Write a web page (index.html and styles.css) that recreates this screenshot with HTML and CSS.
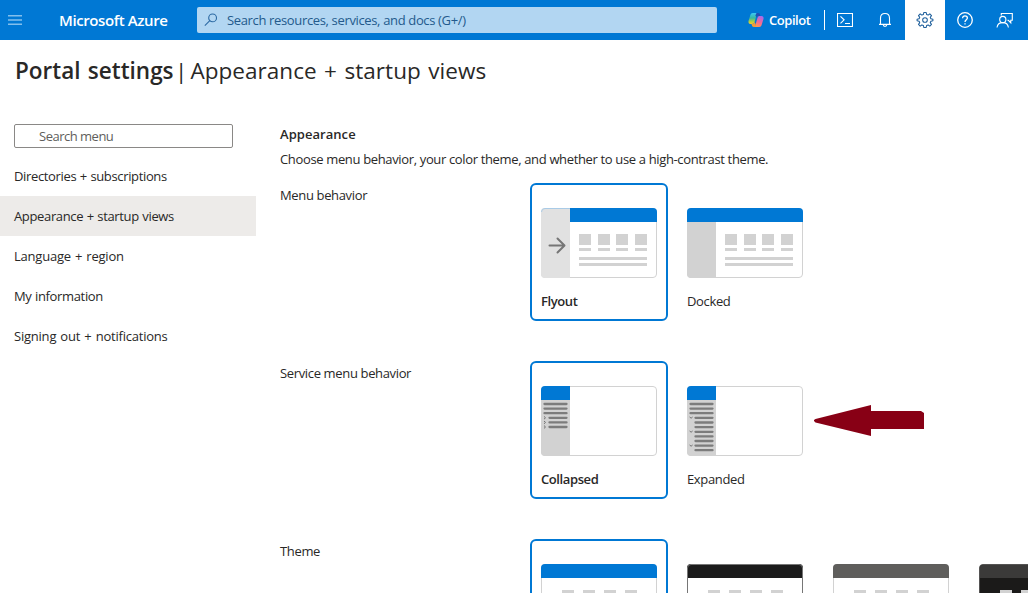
FILE: index.html
```html
<!DOCTYPE html>
<html lang="en">
<head>
<meta charset="utf-8">
<title>Portal settings - Microsoft Azure</title>
<link rel="stylesheet" href="styles.css">
</head>
<body>
<header class="topbar">
  <svg class="menu-icon" width="14" height="10" viewBox="0 0 14 10"><path d="M0 .7h14M0 5h14M0 9.3h14" stroke="#83bfec" stroke-width="1.400"/></svg>
  <span class="brand">Microsoft Azure</span>
  <div class="global-search">
    <svg width="14" height="14" viewBox="0 0 14 14" fill="none" stroke="#2b69a3" stroke-width="1.1"><circle cx="8.6" cy="4.9" r="3.9"/><path d="M5.8 7.7L.8 12.7"/></svg>
    <span class="global-search-text">Search resources, services, and docs (G+/)</span>
  </div>
  <div class="copilot">
    <svg width="16" height="16" viewBox="0 0 16 16">
      <defs>
        <linearGradient id="cool" x1="0" y1="0" x2="0" y2="1"><stop offset="0" stop-color="#3cc8f5"/><stop offset=".45" stop-color="#35b7a5"/><stop offset=".75" stop-color="#a5cf45"/><stop offset="1" stop-color="#ffc928"/></linearGradient>
        <linearGradient id="warm" x1=".7" y1="0" x2=".3" y2="1"><stop offset="0" stop-color="#a56bea"/><stop offset=".5" stop-color="#f0689a"/><stop offset="1" stop-color="#ff9a4d"/></linearGradient>
      </defs>
      <path d="M4.8 1h5.6c-1 .3-1.600 1.100-2 2.500L6.700 9.600C6.200 11.400 5.400 12 4 12H2.400C.8 12 .1 10.500.6 8.800l1.700-5.600C2.800 1.700 3.500 1 4.800 1z" fill="url(#cool)"/>
      <path d="M8.500 1h1.800c1.100 0 1.500.8 1.800 1.700l.4 1.300h-2.200c-1 0-1.500.5-1.800 1.400L7.400 3.500z" fill="#1f4fb5"/>
      <path d="M11.200 15H5.600c1-.3 1.600-1.100 2-2.500l1.700-6.100C9.800 4.600 10.600 4 12 4h1.600c1.600 0 2.300 1.500 1.800 3.200l-1.700 5.600c-.5 1.500-1.200 2.200-2.500 2.200z" fill="url(#warm)"/>
      <path d="M7.500 15H5.700c-1.100 0-1.500-.8-1.800-1.700L3.500 12h.7c1.400 0 2.100-.8 2.500-2.200l1 2.700z" fill="#f59a35"/>
    </svg>
    <span class="copilot-label">Copilot</span>
  </div>
  <div class="divider"></div>
  <nav class="actions">
    <div class="action"><svg width="16" height="14" viewBox="0 0 16 14" fill="none" stroke="#fff"><path d="M.5.500h15v13H.5zM3.500 3.300l3.600 3.500-3.600 3.500M8 10.500h5" stroke-width="1.100"/></svg></div>
    <div class="action"><svg width="14" height="16" viewBox="0 0 14 16" fill="none" stroke="#fff" stroke-width="1.100"><path d="M2.500 12V6.200C2.500 3.300 4.400 1.500 7 1.500s4.500 1.800 4.500 4.700V12M1 12.400h12M5.200 12.600c0 2.400 3.600 2.400 3.600 0"/></svg></div>
    <div class="action action-active"><svg width="18" height="18" viewBox="-9 -9 18 18" fill="none" stroke="#20609c" stroke-width="1.100" stroke-linejoin="round"><path d="M-1.200-7.500h2.400l.4 2 1.500.6 1.700-1.200 1.700 1.700-1.200 1.700.6 1.500 2 .4v1.600l-2 .4-.6 1.500 1.200 1.700-1.700 1.700-1.700-1.200-1.500.6-.4 2h-2.400l-.4-2-1.500-.6-1.700 1.200-1.700-1.700 1.200-1.700-.6-1.500-2-.4v-1.600l2-.4.6-1.500-1.200-1.700 1.700-1.700 1.700 1.200 1.500-.6z"/><circle r="2.300"/></svg></div>
    <div class="action"><svg width="16" height="16" viewBox="0 0 16 16" fill="none" stroke="#fff" stroke-width="1.300"><circle cx="8" cy="8" r="7.300"/><path d="M5.600 6.200C5.600 4.700 6.600 3.800 8 3.800s2.400.9 2.400 2.200C10.400 7.700 8 7.800 8 10M8 11.200v1.400"/></svg></div>
    <div class="action"><svg width="18" height="17" viewBox="0 0 18 17" fill="none" stroke="#fff" stroke-width="1.100"><path d="M5.300 3.500v-2h11v6.800h-1.500v2.500l-2.400-2.500h-1"/><circle cx="6.800" cy="7.500" r="3.100"/><path d="M1 15.500c.4-3 2.700-4.900 5.800-4.900s5.200 1.900 5.600 4.900"/></svg></div>
  </nav>
</header>

<h1 class="title"><span class="title-strong">Portal settings</span><span class="title-bar">|</span><span class="title-page">Appearance + startup views</span></h1>

<div class="layout">
  <aside class="sidebar">
    <div class="menu-search"><span>Search menu</span></div>
    <nav class="menu">
      <a class="menu-item"><span>Directories + subscriptions</span></a>
      <a class="menu-item menu-item-active"><span>Appearance + startup views</span></a>
      <a class="menu-item menu-item-wide"><span>Language + region</span></a>
      <a class="menu-item"><span>My information</span></a>
      <a class="menu-item menu-item-wide"><span>Signing out + notifications</span></a>
    </nav>
  </aside>

  <main class="content">
    <h2 class="section-title"><span>Appearance</span></h2>
    <p class="section-text"><span>Choose menu behavior, your color theme, and whether to use a high-contrast theme.</span></p>

    <section class="setting">
      <div class="setting-label"><span>Menu behavior</span></div>
      <div class="options">
        <div class="option option-selected">
          <svg class="preview" viewBox="0 0 116 70">
            <rect x=".5" y=".5" width="115" height="69" rx="3.500" fill="#fff" stroke="#d2d2d2"/>
            <path d="M29 0h83a4 4 0 0 1 4 4v10H29z" fill="#0078d4"/>
            <path d="M4 0h25v70H4a4 4 0 0 1-4-4V4a4 4 0 0 1 4-4z" fill="#e1e1e1"/>
            <path d="M.5 4A3.500 3.500 0 0 1 4 .5h25" fill="none" stroke="#a9cbe7"/>
            <path d="M8.500 37.500h14.500M16.500 30.500l7 7-7 7" fill="none" stroke="#767676" stroke-width="2" stroke-linecap="round" stroke-linejoin="round"/>
            <path d="M38 26h12v11H38zM57 26h12v11H57zM75 26h12v11H75zM94 26h12v11H94zM38 40h12v3H38zM57 40h12v3H57zM75 40h12v3H75zM94 40h12v3H94zM38 49h68v3H38zM38 55h68v3H38z" fill="#d2d2d2"/>
          </svg>
          <span class="option-label">Flyout</span>
        </div>
        <div class="option">
          <svg class="preview" viewBox="0 0 116 70">
            <rect x=".5" y=".5" width="115" height="69" rx="3.500" fill="#fff" stroke="#d2d2d2"/>
            <path d="M0 14h29v56H4a4 4 0 0 1-4-4z" fill="#d2d2d2"/>
            <path d="M4 0h108a4 4 0 0 1 4 4v10H0V4a4 4 0 0 1 4-4z" fill="#0078d4"/>
            <path d="M38 26h12v11H38zM57 26h12v11H57zM75 26h12v11H75zM94 26h12v11H94zM38 40h12v3H38zM57 40h12v3H57zM75 40h12v3H75zM94 40h12v3H94zM38 49h68v3H38zM38 55h68v3H38z" fill="#d2d2d2"/>
          </svg>
          <span class="option-label">Docked</span>
        </div>
      </div>
    </section>

    <section class="setting">
      <div class="setting-label"><span>Service menu behavior</span></div>
      <div class="options">
        <div class="option option-selected">
          <svg class="preview" viewBox="0 0 116 70">
            <rect x=".5" y=".5" width="115" height="69" rx="3.500" fill="#fff" stroke="#d2d2d2"/>
            <path d="M0 14h29v56H4a4 4 0 0 1-4-4z" fill="#d2d2d2"/>
            <path d="M4 0h25v14H0V4a4 4 0 0 1 4-4z" fill="#0078d4"/>
            <path d="M3.500 18h22M3.500 22.600h22M3.500 27.200h22M8.500 31.800h17M8.500 36.400h17M8.500 41h17" stroke="#7c7c7c" stroke-width="2.300" stroke-linecap="round"/>
            <path d="M3 30.400l1.500 1.400L3 33.200M3 35l1.500 1.400L3 37.800M3 39.600L4.500 41 3 42.400" fill="none" stroke="#707070"/>
          </svg>
          <span class="option-label">Collapsed</span>
        </div>
        <div class="option">
          <svg class="preview" viewBox="0 0 116 70">
            <rect x=".5" y=".5" width="115" height="69" rx="3.500" fill="#fff" stroke="#d2d2d2"/>
            <path d="M0 14h29v56H4a4 4 0 0 1-4-4z" fill="#d2d2d2"/>
            <path d="M4 0h25v14H0V4a4 4 0 0 1 4-4z" fill="#0078d4"/>
            <path d="M3.500 18h22M3.500 22.600h22M3.500 27.200h22M8.500 31.800h17M8.500 36.500h17M8.500 41.100h17M8.500 45.800h17M8.500 50.400h17M8.500 55h17M8.500 59.600h17M8.500 64.200h17" stroke="#7c7c7c" stroke-width="2.300" stroke-linecap="round"/>
            <path d="M2.600 31l1.500 1.200L5.600 31M2.600 45l1.500 1.200L5.600 45M2.600 59l1.500 1.200L5.600 59" fill="none" stroke="#707070"/>
          </svg>
          <span class="option-label">Expanded</span>
        </div>
        <svg class="callout" width="111" height="32" viewBox="0 0 111 32"><path d="M0 15L1.500 14 57 0v6h50l3 2v16H57v7L1.500 17.500 0 16z" fill="#880015"/></svg>
      </div>
    </section>

    <section class="setting">
      <div class="setting-label"><span>Theme</span></div>
      <div class="options">
        <div class="option option-selected">
          <svg class="preview" viewBox="0 0 116 70">
            <rect x=".5" y=".5" width="115" height="69" rx="3.500" fill="#fff" stroke="#d2d2d2"/>
            <path d="M4 0h108a4 4 0 0 1 4 4v10H0V4a4 4 0 0 1 4-4z" fill="#0078d4"/>
            <path d="M21 26h12v11H21zM42 26h12v11H42zM63 26h12v11H63zM84 26h12v11H84z" fill="#d2d2d2"/>
          </svg>
        </div>
        <div class="option">
          <svg class="preview" viewBox="0 0 116 70">
            <rect x=".5" y=".5" width="115" height="69" rx="3.500" fill="#fff"/>
            <path d="M4 0h108a4 4 0 0 1 4 4v10H0V4a4 4 0 0 1 4-4z" fill="#1b1b1b"/>
            <rect x=".5" y=".5" width="115" height="69" rx="3.500" fill="none" stroke="#767676"/>
            <path d="M21 26h12v11H21zM42 26h12v11H42zM63 26h12v11H63zM84 26h12v11H84z" fill="#d2d2d2"/>
          </svg>
        </div>
        <div class="option">
          <svg class="preview" viewBox="0 0 116 70">
            <rect x=".5" y=".5" width="115" height="69" rx="3.500" fill="#fff" stroke="#d2d2d2"/>
            <path d="M4 0h108a4 4 0 0 1 4 4v10H0V4a4 4 0 0 1 4-4z" fill="#5f5e5c"/>
            <path d="M21 26h12v11H21zM42 26h12v11H42zM63 26h12v11H63zM84 26h12v11H84z" fill="#d2d2d2"/>
          </svg>
        </div>
        <div class="option">
          <svg class="preview" viewBox="0 0 116 70">
            <rect x=".5" y=".5" width="115" height="69" rx="3.500" fill="#1b1a19" stroke="#555453"/>
            <path d="M4 1h108a3 3 0 0 1 3 3v10H1V4a3 3 0 0 1 3-3z" fill="#3b3a39"/>
            <path d="M21 26h12v11H21zM42 26h12v11H42zM63 26h12v11H63zM84 26h12v11H84z" fill="#d2d2d2"/>
          </svg>
        </div>
      </div>
    </section>
  </main>
</div>
</body>
</html>
```

FILE: styles.css
```css
* { box-sizing: border-box; }

body {
  margin: 0;
  height: 593px;
  overflow: hidden;
  background: #fff;
  color: #292827;
  font: 13px/20px "Open Sans", "Noto Sans", sans-serif;
  letter-spacing: -0.35px;
}

svg { display: block; flex: none; }

.topbar {
  display: flex;
  align-items: center;
  height: 40px;
  padding-left: 8px;
  background: #0078d4;
  color: #fff;
}
.brand {
  width: 138px;
  margin-left: 37px;
  font-size: 15px;
  font-weight: 600;
  letter-spacing: -0.4px;
  white-space: nowrap;
}
.global-search {
  display: flex;
  align-items: center;
  gap: 9px;
  width: 520px;
  height: 26px;
  padding-left: 7px;
  border-radius: 2px;
  background: #b2d6f2;
  color: #235a8c;
}
.copilot {
  display: flex;
  align-items: center;
  gap: 5px;
  width: 76px;
  margin-left: 31px;
}
.copilot-label { font-size: 13px; font-weight: 600; letter-spacing: -0.45px; }
.divider { width: 1px; height: 20px; background: #fff; }
.actions { display: flex; height: 40px; }
.action {
  display: flex;
  align-items: center;
  justify-content: center;
  width: 40px;
}
.action-active { background: #fff; }

.title {
  display: flex;
  height: 60px;
  margin: 0;
  padding: 15px 0 0 15px;
  font-size: 22.5px;
  font-weight: 400;
  line-height: 32px;
  letter-spacing: 0.05px;
  word-spacing: 1.5px;
  white-space: nowrap;
}
.title-strong { width: 160px; font-weight: 600; letter-spacing: 0; }
.title-page { margin-left: 3px; }

.layout {
  display: flex;
  height: 493px;
  overflow: hidden;
}

.sidebar { flex: none; width: 256px; padding-top: 24px; }
.menu-search {
  display: flex;
  align-items: center;
  width: 219px;
  height: 24px;
  margin-left: 14px;
  padding-left: 24px;
  border: 1px solid #8a8886;
  border-radius: 2px;
  color: #605e5c;
  letter-spacing: -0.5px;
}
.menu { margin-top: 8px; }
.menu-item {
  display: flex;
  align-items: center;
  height: 40px;
  padding-left: 14px;
  word-spacing: 0.5px;
}
.menu-item-wide { word-spacing: 1px; letter-spacing: -0.22px; }
.menu-item-active { background: #edebe9; }

.content { flex: 1; min-width: 0; padding: 24px 0 0 24px; }
.section-title {
  margin: 0;
  font-size: 13px;
  font-weight: 600;
  line-height: 20px;
  letter-spacing: 0.05px;
}
.section-text { margin: 5px 0 14px; white-space: nowrap; }

.setting { display: flex; height: 178px; }
.setting-label { flex: none; width: 250px; padding-top: 2px; }
.options { display: flex; flex: 1; gap: 8px; min-width: 0; }
.option {
  display: flex;
  flex: none;
  flex-direction: column;
  gap: 13px;
  width: 138px;
  height: 138px;
  padding: 23px 9px 0;
  border: 2px solid transparent;
  border-radius: 6px;
}
.option-selected { border-color: #0078d4; }
.option-selected .option-label { font-weight: 600; letter-spacing: -0.4px; }
.preview { width: 116px; height: 70px; }
.callout { margin: 44px 0 0 -8px; }
```
